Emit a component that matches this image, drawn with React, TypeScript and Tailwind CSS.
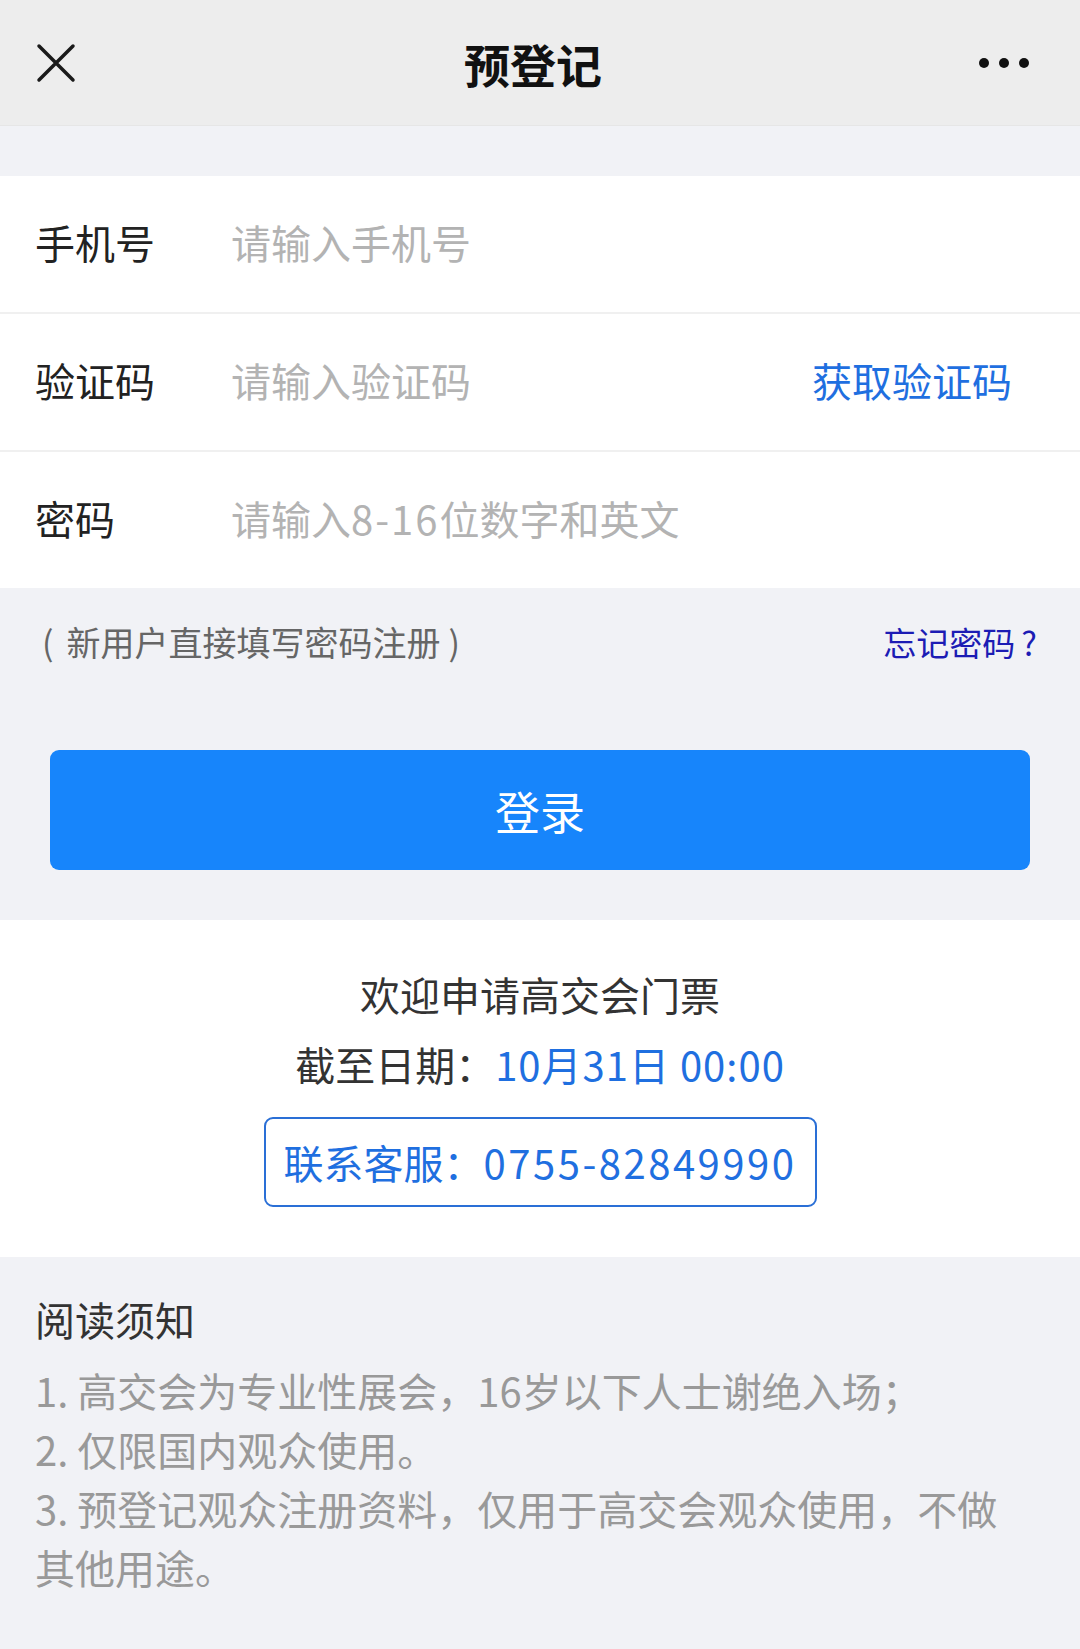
import React from "react";

const font = { fontFamily: '"Noto Sans CJK SC", "Noto Sans", sans-serif' };

function Row({ label, placeholder, action }: { label: string; placeholder: React.ReactNode; action?: string }) {
  return (
    <div className="flex h-[136px] items-center bg-white pb-[5px] pl-[35px] pr-[68px]">
      <div className="w-[196px] shrink-0 text-[40px] leading-none text-[#222]">{label}</div>
      <div className="flex-1 text-[40px] leading-none text-[#b3b3b3]">{placeholder}</div>
      {action && <div className="text-[40px] leading-none text-[#1f6fe0]">{action}</div>}
    </div>
  );
}

export default function App() {
  return (
    <div className="w-[1080px] min-h-[1649px] bg-[#f1f2f6]" style={font}>
      {/* Header */}
      <div className="flex h-[126px] items-center justify-between border-b border-[#e6e6e6] bg-[#ededed] px-[35px]">
        <div className="flex w-[113px] items-center">
          <svg width="40" height="40" viewBox="0 0 40 40" className="ml-[1px]">
            <path d="M3 3 L37 37 M37 3 L3 37" stroke="#1a1a1a" strokeWidth="3.5" strokeLinecap="round" />
          </svg>
        </div>
        <div className="text-[46px] font-bold leading-none text-[#111]">预登记</div>
        <div className="flex w-[127px] items-center justify-end gap-[10px] pr-[16px]">
          <span className="h-[10px] w-[10px] rounded-full bg-[#111]" />
          <span className="h-[10px] w-[10px] rounded-full bg-[#111]" />
          <span className="h-[10px] w-[10px] rounded-full bg-[#111]" />
        </div>
      </div>

      <div className="h-[50px]" />

      {/* Form */}
      <div className="flex flex-col gap-[2px] bg-[#f0f0f0]">
        <Row label="手机号" placeholder="请输入手机号" />
        <Row label="验证码" placeholder="请输入验证码" action="获取验证码" />
        <Row
          label="密码"
          placeholder={
            <>
              请输入<span className="tracking-[2px]">8-16</span>位数字和英文
            </>
          }
        />
      </div>

      {/* hint + button */}
      <div className="px-[50px] pb-[50px] pt-[30px]">
        <div className="flex h-[48px] items-center justify-between">
          <div className="-ml-[8px] text-[34px] leading-none text-[#666]">
            <span>(</span>
            <span className="ml-[13px]">新用户直接填写密码注册</span>
            <span className="ml-[8px]">)</span>
          </div>
          <div className="mr-[-7px] text-[33px] leading-none text-[#1c1cb4]">
            忘记密码<span className="ml-[6px]">?</span>
          </div>
        </div>
        <div className="mt-[84px] flex h-[120px] items-center justify-center rounded-[9px] bg-[#1785fb] text-[45px] leading-none text-white">
          登录
        </div>
      </div>

      {/* welcome */}
      <div className="flex h-[337px] flex-col items-center bg-white pt-[52px]">
        <div className="text-[40px] leading-[44px] text-[#333]">欢迎申请高交会门票</div>
        <div className="mt-[26px] text-[40px] leading-[44px] text-[#333]">
          截至日期：<span className="tracking-[1px] text-[#1f6fe0]">10月31日 00:00</span>
        </div>
        <div className="mt-[31px] flex h-[90px] w-[553px] items-center justify-center rounded-[9px] border-2 border-[#2a6fd6] text-[40px] leading-none text-[#1f6fe0]">
          联系客服：<span className="tracking-[2.5px]">0755-82849990</span>
        </div>
      </div>

      {/* notice */}
      <div className="pl-[35px] pr-[55px] pt-[40px] pb-[40px]">
        <div className="text-[40px] leading-[44px] text-[#333]">阅读须知</div>
        <div className="mt-[20px] text-[40px] leading-[59px] text-[#999]">
          <div>1. 高交会为专业性展会，16岁以下人士谢绝入场；</div>
          <div>2. 仅限国内观众使用。</div>
          <div>3. 预登记观众注册资料，仅用于高交会观众使用，不做其他用途。</div>
        </div>
      </div>
    </div>
  );
}
